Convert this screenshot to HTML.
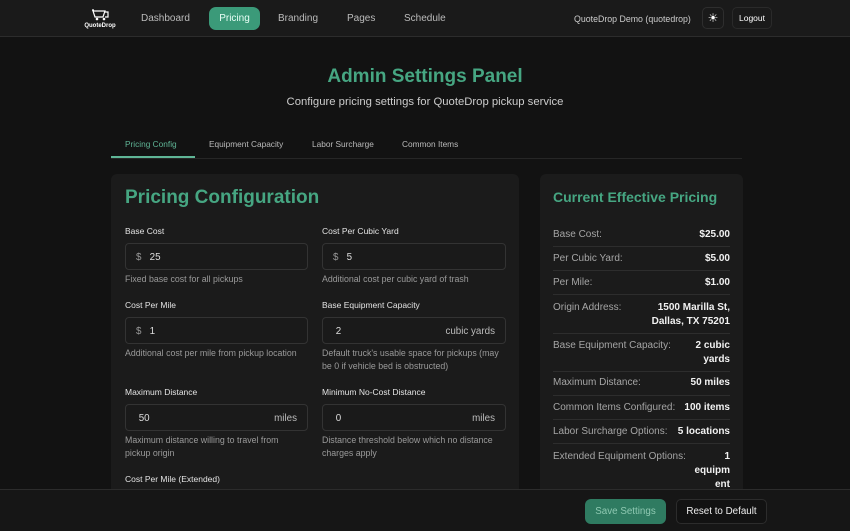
<!DOCTYPE html>
<html><head><style>
*{box-sizing:border-box;margin:0;padding:0}
body{width:850px;height:531px;overflow:hidden;background:#121212;font-family:"Liberation Sans",sans-serif;color:#ddd;position:relative}
.a{position:absolute}
.nav{left:0;top:0;width:850px;height:37px;background:#1a1a1a;border-bottom:1px solid #2c2c2c}
.nl{font-size:10px;color:#bbb;top:13px}
.lbl{font-size:8.5px;color:#e4e4e4}
.help{font-size:8.8px;color:#9a9a9a;line-height:13px}
.inp{height:27px;border:1px solid #333;border-radius:4px;background:#1a1a1a;font-size:9.8px;color:#ddd;padding:8px 10px}
.inp .u{position:absolute;right:10px;top:8px;color:#bbb}
.row{left:553px;width:177px;font-size:10px;color:#a5a5a5}
.row b{position:absolute;right:0;top:0;color:#f2f2f2;text-align:right}
.sep{left:553px;width:177px;height:1px;background:#2d2d2d}
</style></head><body>
<div class="a nav"></div>
<div class="a" style="left:83px;top:8px;width:34px;text-align:center;color:#fff">
<svg width="20" height="12" viewBox="0 0 20 12"><path d="M3 2h12l-2 6H5z M15 3h3v5h-3 M2 1h2" stroke="#fff" fill="none" stroke-width="1.2"/><circle cx="7" cy="10" r="1.3" fill="#fff"/><circle cx="14" cy="10" r="1.3" fill="#fff"/></svg>
<div style="font-size:6px;font-weight:bold;margin-top:-3px">QuoteDrop</div></div>
<div class="a nl" style="left:141px">Dashboard</div>
<div class="a" style="left:209px;top:7px;width:51px;height:23px;background:#3b9a79;border-radius:7px;color:#e8fff6;font-size:10px;text-align:center;line-height:23px">Pricing</div>
<div class="a nl" style="left:278px">Branding</div>
<div class="a nl" style="left:347px">Pages</div>
<div class="a nl" style="left:404px">Schedule</div>
<div class="a" style="left:574px;top:14px;font-size:8.8px;color:#ccc">QuoteDrop Demo (quotedrop)</div>
<div class="a" style="left:702px;top:7px;width:22px;height:22px;border:1px solid #2e2e2e;border-radius:5px;color:#fff;text-align:center;line-height:21px;font-size:12px">☀</div>
<div class="a" style="left:732px;top:7px;width:40px;height:22px;border:1px solid #2a2a2a;border-radius:5px;color:#fff;font-size:8.5px;text-align:center;line-height:21px">Logout</div>

<div class="a" style="left:0;width:850px;top:66px;text-align:center;font-size:19px;font-weight:bold;color:#46a682">Admin Settings Panel</div>
<div class="a" style="left:0;width:850px;top:96px;text-align:center;font-size:11.3px;color:#ccc">Configure pricing settings for QuoteDrop pickup service</div>

<div class="a" style="left:111px;top:158px;width:631px;height:1px;background:#262626"></div>
<div class="a" style="left:111px;top:156px;width:84px;height:2px;background:#5fb596"></div>
<div class="a" style="left:125px;top:139px;font-size:8.3px;color:#5fb596">Pricing Config</div>
<div class="a" style="left:209px;top:139px;font-size:8.3px;color:#bbb">Equipment Capacity</div>
<div class="a" style="left:312px;top:139px;font-size:8.3px;color:#bbb">Labor Surcharge</div>
<div class="a" style="left:402px;top:139px;font-size:8.3px;color:#bbb">Common Items</div>

<div class="a" style="left:111px;top:174px;width:408px;height:340px;background:#1b1b1b;border-radius:6px"></div>
<div class="a" style="left:125px;top:187px;font-size:19px;font-weight:bold;color:#46a682">Pricing Configuration</div>

<div class="a lbl" style="left:125px;top:226px">Base Cost</div>
<div class="a inp" style="left:125px;top:243px;width:183px"><span style="color:#999">$</span>&nbsp;&nbsp; 25</div>
<div class="a help" style="left:125px;top:273px">Fixed base cost for all pickups</div>
<div class="a lbl" style="left:322px;top:226px">Cost Per Cubic Yard</div>
<div class="a inp" style="left:322px;top:243px;width:184px"><span style="color:#999">$</span>&nbsp;&nbsp; 5</div>
<div class="a help" style="left:322px;top:273px">Additional cost per cubic yard of trash</div>

<div class="a lbl" style="left:125px;top:300px">Cost Per Mile</div>
<div class="a inp" style="left:125px;top:317px;width:183px"><span style="color:#999">$</span>&nbsp;&nbsp; 1</div>
<div class="a help" style="left:125px;top:347px">Additional cost per mile from pickup location</div>
<div class="a lbl" style="left:322px;top:300px">Base Equipment Capacity</div>
<div class="a inp" style="left:322px;top:317px;width:184px">&nbsp;2<span class="u">cubic yards</span></div>
<div class="a help" style="left:322px;top:347px;width:185px">Default truck's usable space for pickups (may be 0 if vehicle bed is obstructed)</div>

<div class="a lbl" style="left:125px;top:387px">Maximum Distance</div>
<div class="a inp" style="left:125px;top:404px;width:183px">&nbsp;50<span class="u">miles</span></div>
<div class="a help" style="left:125px;top:434px;width:175px">Maximum distance willing to travel from pickup origin</div>
<div class="a lbl" style="left:322px;top:387px">Minimum No-Cost Distance</div>
<div class="a inp" style="left:322px;top:404px;width:184px">&nbsp;0<span class="u">miles</span></div>
<div class="a help" style="left:322px;top:434px;width:180px">Distance threshold below which no distance charges apply</div>
<div class="a lbl" style="left:125px;top:474px">Cost Per Mile (Extended)</div>

<div class="a" style="left:540px;top:174px;width:203px;height:340px;background:#1b1b1b;border-radius:6px"></div>
<div class="a" style="left:553px;top:189px;font-size:14px;font-weight:bold;color:#46a682">Current Effective Pricing</div>
<div class="a row" style="top:229px">Base Cost:<b>$25.00</b></div>
<div class="a sep" style="top:246px"></div>
<div class="a row" style="top:253px">Per Cubic Yard:<b>$5.00</b></div>
<div class="a sep" style="top:270px"></div>
<div class="a row" style="top:277px">Per Mile:<b>$1.00</b></div>
<div class="a sep" style="top:294px"></div>
<div class="a row" style="top:301px;line-height:14px">Origin Address:<b>1500 Marilla St,<br>Dallas, TX 75201</b></div>
<div class="a sep" style="top:333px"></div>
<div class="a row" style="top:339px;line-height:14px">Base Equipment Capacity:<b>2 cubic<br>yards</b></div>
<div class="a sep" style="top:371px"></div>
<div class="a row" style="top:377px">Maximum Distance:<b>50 miles</b></div>
<div class="a sep" style="top:395px"></div>
<div class="a row" style="top:402px">Common Items Configured:<b>100 items</b></div>
<div class="a sep" style="top:419px"></div>
<div class="a row" style="top:426px">Labor Surcharge Options:<b>5 locations</b></div>
<div class="a sep" style="top:443px"></div>
<div class="a row" style="top:450px;line-height:14px">Extended Equipment Options:<b>1<br>equipm<br>ent</b></div>

<div class="a" style="left:0;top:489px;width:850px;height:42px;background:#161616;border-top:1px solid #2c2c2c"></div>
<div class="a" style="left:585px;top:499px;width:81px;height:25px;background:#2f7b61;border-radius:6px;color:#8fc9b2;font-size:9.8px;text-align:center;line-height:25px">Save Settings</div>
<div class="a" style="left:676px;top:499px;width:91px;height:25px;border:1px solid #2c2c2c;border-radius:5px;background:#121212;color:#eee;font-size:9.8px;text-align:center;line-height:23px">Reset to Default</div>
</body></html>
